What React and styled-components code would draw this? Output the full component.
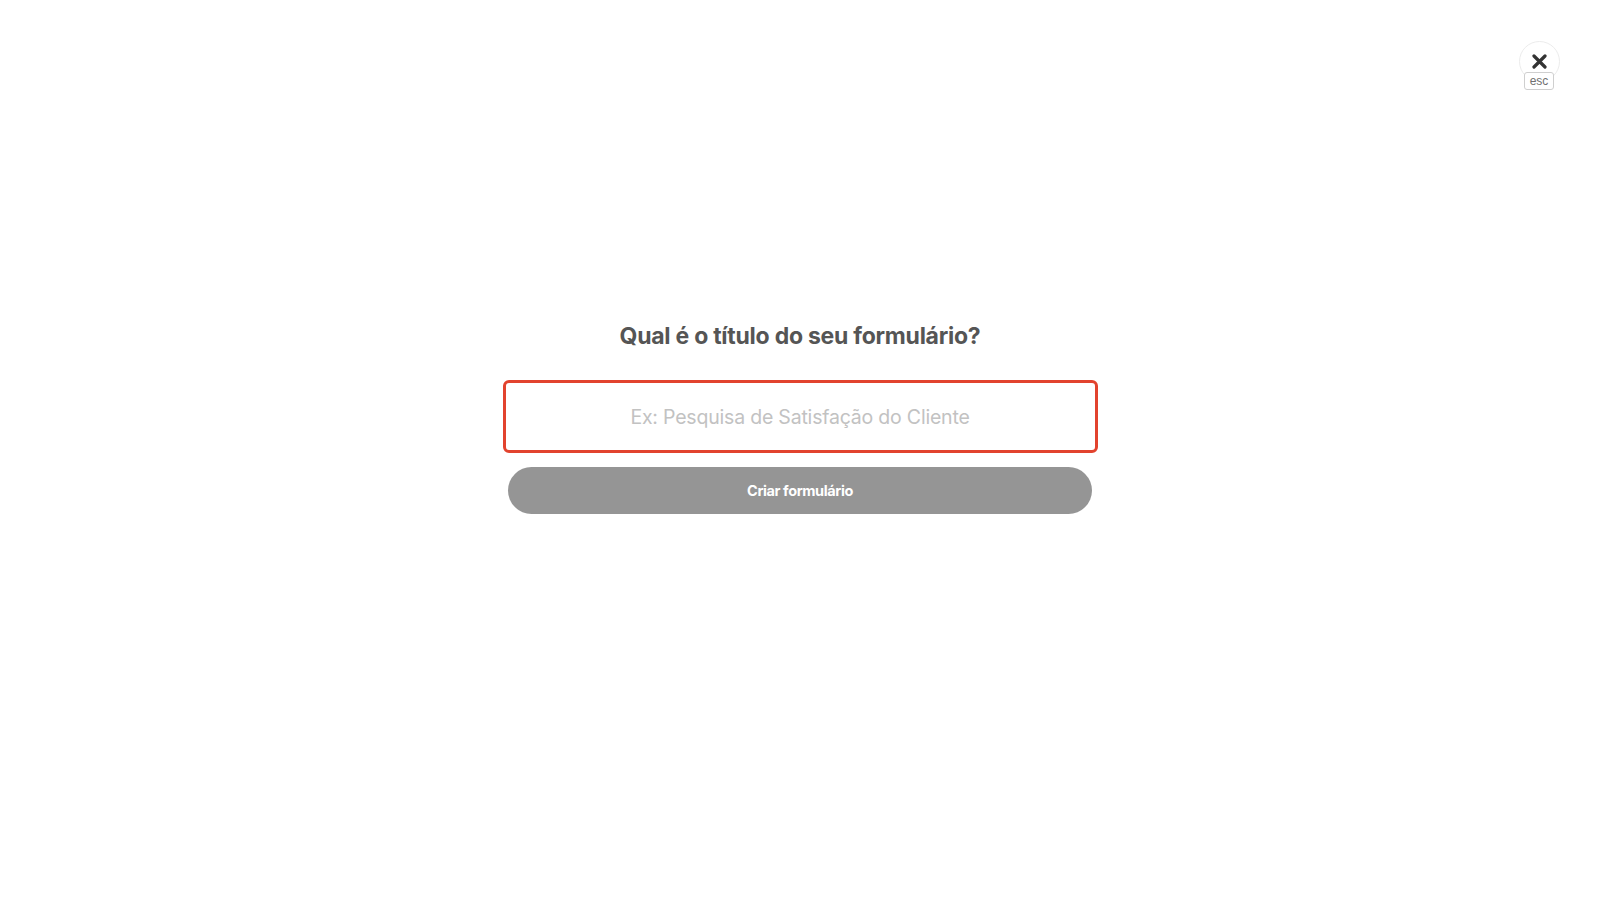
import React, { useState } from 'react'
import styled, { createGlobalStyle } from 'styled-components'

const GlobalStyle = createGlobalStyle`
  html, body {
    margin: 0;
    padding: 0;
    background: #fff;
    font-family: Inter, "Noto Sans", sans-serif;
  }
  * { box-sizing: border-box; }
`

const Page = styled.div`
  position: relative;
  width: 100%;
  height: 100vh;
  display: flex;
  flex-direction: column;
  align-items: center;
  padding-top: 322px;
`

const Close = styled.button`
  position: absolute;
  top: 41px;
  right: 40px;
  width: 41px;
  height: 41px;
  border-radius: 50%;
  border: 1px solid #ececec;
  background: #fff;
  padding: 0;
  cursor: pointer;
  display: flex;
  align-items: flex-start;
  justify-content: center;
  padding-top: 12px;
`

const Esc = styled.span`
  position: absolute;
  top: 30px;
  left: 4px;
  width: 30px;
  height: 18px;
  border: 1px solid #cfcfcf;
  border-radius: 3px;
  background: #fff;
  color: #707070;
  font-size: 12px;
  line-height: 16px;
  text-align: center;
`

const Title = styled.h1`
  margin: 0;
  font-size: 23px;
  font-weight: 700;
  color: #555555;
  letter-spacing: -0.25px;
`

const Field = styled.input`
  margin-top: 30px;
  width: 595px;
  height: 73px;
  border: 3px solid #e2432e;
  border-radius: 6px;
  outline: none;
  text-align: center;
  font-family: Inter, "Noto Sans", sans-serif;
  font-size: 19.5px;
  letter-spacing: -0.2px;
  color: #333;
  &::placeholder {
    color: #c2c2c2;
  }
`

const Submit = styled.button`
  margin-top: 14px;
  width: 584px;
  height: 47px;
  border: none;
  border-radius: 24px;
  background: ${props => (props.active ? '#e2432e' : '#959595')};
  color: #fff;
  font-family: Inter, "Noto Sans", sans-serif;
  font-size: 14.5px;
  font-weight: 700;
  letter-spacing: -0.4px;
  cursor: pointer;
`

export default function App() {
  const [title, setTitle] = useState('')
  return (
    <Page>
      <GlobalStyle />
      <Close aria-label="Fechar">
        <svg width="15" height="15" viewBox="0 0 15 15">
          <path
            d="M2 2 L13 13 M13 2 L2 13"
            stroke="#333"
            strokeWidth="3.2"
            strokeLinecap="round"
          />
        </svg>
        <Esc>esc</Esc>
      </Close>
      <Title>Qual é o título do seu formulário?</Title>
      <Field
        value={title}
        onChange={e => setTitle(e.target.value)}
        placeholder="Ex: Pesquisa de Satisfação do Cliente"
      />
      <Submit active={title.length > 0}>Criar formulário</Submit>
    </Page>
  )
}
